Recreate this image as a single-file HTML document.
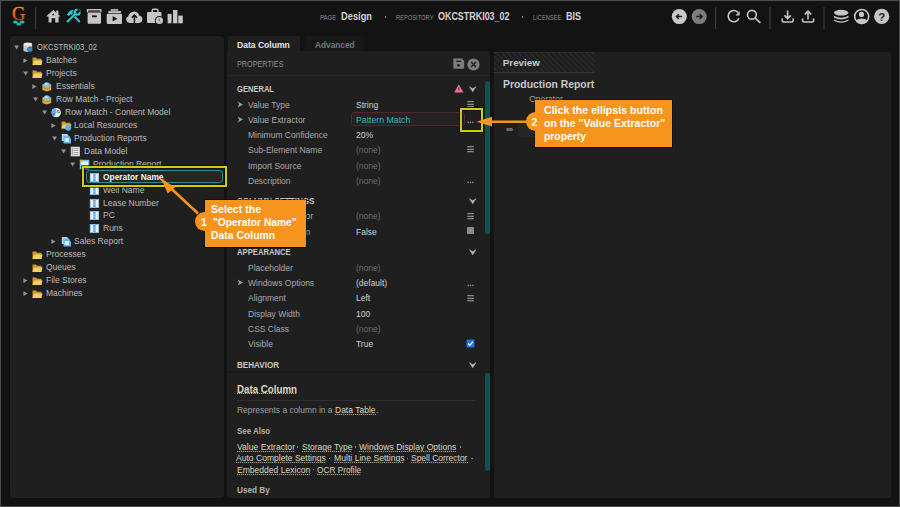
<!DOCTYPE html>
<html><head><meta charset="utf-8"><style>
html,body{margin:0;padding:0;}
body{width:900px;height:507px;background:#4d4d4d;position:relative;overflow:hidden;font-family:"Liberation Sans",sans-serif;}
.t{position:absolute;white-space:nowrap;}
.r{position:absolute;}
</style></head><body>

<div class="r" style="left:1px;top:1px;width:898px;height:505px;background:#131313;"></div>
<svg class="r" style="left:0;top:0" width="900" height="35" viewBox="0 0 900 35">
<defs><linearGradient id="gg" x1="0" y1="0" x2="0" y2="1"><stop offset="0.1" stop-color="#f4a41e"/><stop offset="0.55" stop-color="#f05a22"/><stop offset="0.9" stop-color="#e0161c"/></linearGradient></defs>
<text x="18.7" y="20.4" text-anchor="middle" font-family="Liberation Serif" font-size="18.5" fill="url(#gg)" stroke="url(#gg)" stroke-width="0.3">G</text>
<ellipse cx="15.4" cy="22" rx="2.4" ry="1.5" fill="#17c2b0"/>
<ellipse cx="22.2" cy="22" rx="2.4" ry="1.5" fill="#17c2b0"/>
<ellipse cx="18.8" cy="24.1" rx="2.4" ry="1.5" fill="#17c2b0"/>
<rect x="34.8" y="7" width="1.5" height="22" fill="#363636"/>
<!-- home -->
<path d="M53.3 10 L60.6 16.6 L58.6 16.6 L58.6 22.6 L55.2 22.6 L55.2 18.2 L51.6 18.2 L51.6 22.6 L48.6 22.6 L48.6 16.6 L46.1 16.6 Z" fill="#c6c6c6"/>
<rect x="56.2" y="10.6" width="2.2" height="3.6" fill="#c6c6c6"/>
<path d="M53.3 13.3 L54.6 15.2 L52 15.2 Z" fill="#131313"/>
<!-- tools -->
<path d="M71 13 L79.2 21.3" stroke="#2ec8d4" stroke-width="2.1" stroke-linecap="round"/>
<path d="M66.8 14.4 L70.4 10.6 Q72.2 9.4 73.6 10.4 L72.6 12.2 L70.6 14.4 L68.6 16 Z" fill="#2ec8d4"/>
<path d="M67.4 21.6 L75.2 13.8" stroke="#131313" stroke-width="3.6"/>
<path d="M67.6 21.4 L75.6 13.4" stroke="#2ec8d4" stroke-width="2.1" stroke-linecap="round"/>
<circle cx="77.2" cy="12.3" r="2.5" stroke="#2ec8d4" stroke-width="2" fill="none"/>
<path d="M77.2 12.3 L77.8 8.6 L80.9 11.6 Z" fill="#131313"/>
<!-- archive -->
<rect x="86.8" y="9" width="14.8" height="3.6" rx="0.8" fill="#c6c6c6"/>
<rect x="88.1" y="10.4" width="12.2" height="1.3" fill="#131313"/>
<rect x="87.6" y="13" width="13.4" height="10.8" rx="0.8" fill="#c6c6c6"/>
<rect x="92" y="15.4" width="4.8" height="1.8" fill="#131313"/>
<!-- play box -->
<rect x="110.7" y="9.1" width="7.5" height="1.6" fill="#c6c6c6"/>
<rect x="108.4" y="11.1" width="12.6" height="2" fill="#c6c6c6"/>
<rect x="106.7" y="13.7" width="15.3" height="10.3" rx="1" fill="#c6c6c6"/>
<path d="M112.7 16 L117.2 18.8 L112.7 21.6 Z" fill="#131313"/>
<!-- cloud -->
<path d="M129.5 23.1 A3.6 3.6 0 0 1 128.4 16.2 A5.6 5.6 0 0 1 139.2 15.4 A3.9 3.9 0 0 1 139 23.1 Z" fill="#c6c6c6"/>
<path d="M134.4 23.2 L134.4 15.6 M131.8 17.8 L134.4 15 L137 17.8" stroke="#131313" stroke-width="1.5" fill="none"/>
<!-- briefcase -->
<rect x="152.2" y="9.2" width="5.8" height="3.6" rx="1.2" fill="none" stroke="#c6c6c6" stroke-width="1.4"/>
<rect x="147" y="12" width="14.5" height="11" rx="1" fill="#c6c6c6"/>
<circle cx="159.4" cy="20.5" r="4.6" fill="#131313"/>
<circle cx="159.4" cy="20.5" r="3.6" fill="#c6c6c6"/>
<path d="M159 18.6 L159.3 20.6 L160.4 21.6" stroke="#333" stroke-width="0.8" fill="none"/>
<!-- bars -->
<rect x="167.6" y="13.9" width="4" height="9.4" fill="#c6c6c6"/>
<rect x="173" y="10" width="4.4" height="13.3" fill="#c6c6c6"/>
<rect x="178.3" y="15.6" width="4.5" height="7.7" fill="#c6c6c6"/>
<!-- nav circles -->
<circle cx="679.3" cy="16.6" r="7.5" fill="#c9c9c9"/>
<path d="M682.2 16.6 L676.4 16.6 M678.8 14.2 L676.4 16.6 L678.8 19" stroke="#1c1c1c" stroke-width="1.5" fill="none"/>
<circle cx="699.2" cy="16.6" r="7.5" fill="#7d7d7d"/>
<path d="M696.3 16.6 L702.1 16.6 M699.7 14.2 L702.1 16.6 L699.7 19" stroke="#1c1c1c" stroke-width="1.5" fill="none"/>
<rect x="715" y="7" width="1.2" height="22" fill="#3a3a3a"/>
<!-- refresh -->
<path d="M738.2 12.6 A5.6 5.6 0 1 0 739 18.2" stroke="#c6c6c6" stroke-width="1.6" fill="none"/>
<path d="M735.4 15.4 L739.6 15.4 L739.6 10.9 Z" fill="#c6c6c6"/>
<!-- search -->
<circle cx="751.9" cy="14.8" r="4.4" stroke="#c6c6c6" stroke-width="1.6" fill="none"/>
<path d="M755.2 18.1 L759.8 22.4" stroke="#c6c6c6" stroke-width="1.7" stroke-linecap="round"/>
<rect x="769.4" y="7" width="1.2" height="22" fill="#3a3a3a"/>
<!-- download -->
<path d="M787.6 10.4 L787.6 18.6 M784.4 15.4 L787.6 18.6 L790.8 15.4" stroke="#c6c6c6" stroke-width="1.6" fill="none"/>
<path d="M782.2 18.4 L782.2 20.6 Q782.2 22 783.6 22 L791.8 22 Q793.2 22 793.2 20.6 L793.2 18.4" stroke="#c6c6c6" stroke-width="1.6" fill="none"/>
<!-- upload -->
<path d="M808 19.6 L808 11.2 M804.8 14.4 L808 11.2 L811.2 14.4" stroke="#c6c6c6" stroke-width="1.6" fill="none"/>
<path d="M802.6 18.4 L802.6 20.6 Q802.6 22 804 22 L812.2 22 Q813.6 22 813.6 20.6 L813.6 18.4" stroke="#c6c6c6" stroke-width="1.6" fill="none"/>
<rect x="823.4" y="7" width="1.2" height="22" fill="#3a3a3a"/>
<!-- database -->
<ellipse cx="841.2" cy="12.7" rx="7.3" ry="2.9" fill="#c6c6c6"/>
<path d="M833.9 15.8 Q841.2 19.8 848.5 15.8 L848.5 17.4 Q841.2 21.4 833.9 17.4 Z" fill="#c6c6c6"/>
<path d="M833.9 19.4 Q841.2 23.4 848.5 19.4 L848.5 20.8 Q841.2 24.8 833.9 20.8 Z" fill="#c6c6c6"/>
<!-- user -->
<circle cx="861.7" cy="16.5" r="7" stroke="#c6c6c6" stroke-width="1.6" fill="none"/>
<circle cx="861.5" cy="14.4" r="2.6" fill="#c6c6c6"/>
<path d="M855.6 20.6 Q861.6 16.6 867.8 20.6 Q865 23.6 861.7 23.6 Q858.4 23.6 855.6 20.6 Z" fill="#c6c6c6"/>
<!-- help -->
<circle cx="881.7" cy="16.4" r="7.6" fill="#c6c6c6"/>
<text x="881.7" y="20.6" text-anchor="middle" font-family="Liberation Sans" font-weight="bold" font-size="11.5" fill="#1c1c1c">?</text>
</svg>
<div class="t" style="left:319.8px;top:13.87px;font-size:7.6px;line-height:7.6px;color:#8c8c8c;transform:scaleX(0.7881);transform-origin:0 0;">PAGE</div>
<div class="t" style="left:341px;top:12.23px;font-size:10px;line-height:10px;color:#d4d4d4;font-weight:bold;transform:scaleX(0.9298);transform-origin:0 0;">Design</div>
<div class="r" style="left:384.6px;top:16.3px;width:1.4px;height:1.4px;background:#8c8c8c;"></div>
<div class="t" style="left:395.5px;top:13.87px;font-size:7.6px;line-height:7.6px;color:#8c8c8c;transform:scaleX(0.7567);transform-origin:0 0;">REPOSITORY</div>
<div class="t" style="left:438px;top:12.23px;font-size:10px;line-height:10px;color:#d4d4d4;font-weight:bold;transform:scaleX(0.8934);transform-origin:0 0;">OKCSTRKI03_02</div>
<div class="r" style="left:521.6px;top:16.3px;width:1.4px;height:1.4px;background:#8c8c8c;"></div>
<div class="t" style="left:532.7px;top:13.87px;font-size:7.6px;line-height:7.6px;color:#8c8c8c;transform:scaleX(0.7528);transform-origin:0 0;">LICENSEE</div>
<div class="t" style="left:565.5px;top:12.23px;font-size:10px;line-height:10px;color:#d4d4d4;font-weight:bold;transform:scaleX(0.9118);transform-origin:0 0;">BIS</div>
<div class="r" style="left:9.5px;top:35.7px;width:214px;height:461.9px;background:#1f1f1f;border-radius:3px;box-shadow:0 0 0 1px #101010;"></div>
<div class="r" style="left:227.5px;top:35.7px;width:72.5px;height:20px;background:#1f1f1f;border-radius:3px 3px 0 0;"></div>
<div class="r" style="left:305px;top:35.7px;width:59px;height:16px;background:#181818;border-radius:3px 3px 0 0;"></div>
<div class="r" style="left:227px;top:51.3px;width:263.3px;height:446.3px;background:#1f1f1f;border-radius:0 3px 3px 3px;"></div>
<div class="r" style="left:493.5px;top:51.7px;width:397.7px;height:445.9px;background:#1f1f1f;border-radius:3px;"></div>
<div class="r" style="left:85.8px;top:170.2px;width:137.7px;height:12.5px;background:#262626;border:1.5px solid #2a8c92;border-radius:3.5px;box-sizing:border-box;"></div>
<svg class="r" style="left:14.0px;top:45.4px;" width="6" height="6" viewBox="0 0 6 6"><path d="M0.2 0.4 L5 0.4 L2.6 4.6 Z" fill="#8f949a"/></svg>
<svg class="r" style="left:23.0px;top:42.4px;" width="11" height="11" viewBox="0 0 11 11"><ellipse cx="4.8" cy="2.3" rx="4.3" ry="1.7" fill="#f0f0f0"/><rect x="0.5" y="2.3" width="8.6" height="6" fill="#dde0e3"/><ellipse cx="4.8" cy="8.3" rx="4.3" ry="1.7" fill="#c4c8cc"/><path d="M0.5 4.4 Q4.8 6.2 9.1 4.4 M0.5 6.4 Q4.8 8.2 9.1 6.4" stroke="#9a9ea2" stroke-width="0.6" fill="none"/><circle cx="7" cy="7.4" r="2.5" fill="#3c8fdc"/><circle cx="7" cy="7.4" r="2.5" fill="none" stroke="#1f1f1f" stroke-width="0.5"/></svg>
<div class="t" style="left:36.7px;top:43.38px;font-size:9px;line-height:9px;color:#bcbcbc;transform:scaleX(0.8447);transform-origin:0 0;">OKCSTRKI03_02</div>
<svg class="r" style="left:23.0px;top:57.93px;" width="6" height="6" viewBox="0 0 6 6"><path d="M0.4 0.2 L4.6 2.6 L0.4 5 Z" fill="#8f949a"/></svg>
<svg class="r" style="left:32.4px;top:56.33px;" width="11" height="10" viewBox="0 0 11 10"><path d="M0.5 1.5 L4 1.5 L5 2.8 L9.5 2.8 L9.5 9 L0.5 9 Z" fill="#c9982e"/><path d="M0.5 9 L2 4.5 L10.5 4.5 L9.3 9 Z" fill="#f3cf6a"/></svg>
<div class="t" style="left:46.1px;top:56.31px;font-size:9px;line-height:9px;color:#bcbcbc;transform:scaleX(0.944);transform-origin:0 0;">Batches</div>
<svg class="r" style="left:23.4px;top:71.26px;" width="6" height="6" viewBox="0 0 6 6"><path d="M0.2 0.4 L5 0.4 L2.6 4.6 Z" fill="#8f949a"/></svg>
<svg class="r" style="left:32.4px;top:69.26px;" width="11" height="10" viewBox="0 0 11 10"><path d="M0.5 1.5 L4 1.5 L5 2.8 L9.5 2.8 L9.5 9 L0.5 9 Z" fill="#c9982e"/><path d="M0.5 9 L2 4.5 L10.5 4.5 L9.3 9 Z" fill="#f3cf6a"/></svg>
<div class="t" style="left:46.1px;top:69.24px;font-size:9px;line-height:9px;color:#bcbcbc;transform:scaleX(0.944);transform-origin:0 0;">Projects</div>
<svg class="r" style="left:32.4px;top:83.79px;" width="6" height="6" viewBox="0 0 6 6"><path d="M0.4 0.2 L4.6 2.6 L0.4 5 Z" fill="#8f949a"/></svg>
<svg class="r" style="left:41.8px;top:81.19px;" width="11" height="11" viewBox="0 0 11 11"><path d="M0.4 3.6 L4.8 1.8 L9.2 3.6 L9.2 9 L4.8 10.6 L0.4 9 Z" fill="#e2a83c"/><path d="M0.4 6.2 L4.8 7.8 L9.2 6.2" stroke="#b88026" stroke-width="0.8" fill="none"/><ellipse cx="4.8" cy="3.9" rx="3" ry="2.6" fill="#74c2ee"/><ellipse cx="4.3" cy="3.2" rx="1.2" ry="0.9" fill="#cdeafa"/></svg>
<div class="t" style="left:55.5px;top:82.17px;font-size:9px;line-height:9px;color:#bcbcbc;transform:scaleX(0.944);transform-origin:0 0;">Essentials</div>
<svg class="r" style="left:32.8px;top:97.11999999999999px;" width="6" height="6" viewBox="0 0 6 6"><path d="M0.2 0.4 L5 0.4 L2.6 4.6 Z" fill="#8f949a"/></svg>
<svg class="r" style="left:41.8px;top:94.11999999999999px;" width="11" height="11" viewBox="0 0 11 11"><path d="M0.4 3.6 L4.8 1.8 L9.2 3.6 L9.2 9 L4.8 10.6 L0.4 9 Z" fill="#e2a83c"/><path d="M0.4 6.2 L4.8 7.8 L9.2 6.2" stroke="#b88026" stroke-width="0.8" fill="none"/><ellipse cx="4.8" cy="3.9" rx="3" ry="2.6" fill="#74c2ee"/><ellipse cx="4.3" cy="3.2" rx="1.2" ry="0.9" fill="#cdeafa"/></svg>
<div class="t" style="left:55.5px;top:95.10px;font-size:9px;line-height:9px;color:#bcbcbc;transform:scaleX(0.944);transform-origin:0 0;">Row Match - Project</div>
<svg class="r" style="left:42.2px;top:110.05px;" width="6" height="6" viewBox="0 0 6 6"><path d="M0.2 0.4 L5 0.4 L2.6 4.6 Z" fill="#8f949a"/></svg>
<svg class="r" style="left:51.2px;top:107.05px;" width="11" height="11" viewBox="0 0 11 11"><circle cx="5.2" cy="5.6" r="4.7" fill="#e6f2fa"/><path d="M5.2 0.9 A4.7 4.7 0 0 0 0.5 5.6 L5.2 5.6 Z" fill="#5fb0e8"/><path d="M0.5 5.6 A4.7 4.7 0 0 0 3 9.8 L5.2 5.6 Z" fill="#3f8fd4"/><path d="M5.2 5.6 L6.6 2.4 L8.4 3.4 Z" fill="#e04848"/><path d="M5.2 5.6 L8.9 4.6 L9.4 6.4 Z" fill="#50b050"/></svg>
<div class="t" style="left:64.9px;top:108.03px;font-size:9px;line-height:9px;color:#bcbcbc;transform:scaleX(0.944);transform-origin:0 0;">Row Match - Content Model</div>
<svg class="r" style="left:51.2px;top:122.58000000000001px;" width="6" height="6" viewBox="0 0 6 6"><path d="M0.4 0.2 L4.6 2.6 L0.4 5 Z" fill="#8f949a"/></svg>
<svg class="r" style="left:60.6px;top:119.98px;" width="11" height="11" viewBox="0 0 11 11"><path d="M0.5 1.5 L4 1.5 L5 2.8 L9.5 2.8 L9.5 8.5 L0.5 8.5 Z" fill="#c9982e"/><path d="M0.5 8.5 L2 4.5 L10.5 4.5 L9.3 8.5 Z" fill="#f3cf6a"/><circle cx="7.2" cy="7.8" r="3" fill="#5ab4ec"/></svg>
<div class="t" style="left:74.30000000000001px;top:120.96px;font-size:9px;line-height:9px;color:#bcbcbc;transform:scaleX(0.944);transform-origin:0 0;">Local Resources</div>
<svg class="r" style="left:51.6px;top:135.91px;" width="6" height="6" viewBox="0 0 6 6"><path d="M0.2 0.4 L5 0.4 L2.6 4.6 Z" fill="#8f949a"/></svg>
<svg class="r" style="left:60.6px;top:132.91px;" width="11" height="11" viewBox="0 0 11 11"><path d="M0.8 1 L6 1 L8.5 3.5 L8.5 8 L0.8 8 Z" fill="#9fd6f4"/><path d="M2.5 3 L7.5 3 L10 5.5 L10 10.5 L2.5 10.5 Z" fill="#62b6ea"/><rect x="3.8" y="5" width="4" height="4" fill="#dff1fb"/></svg>
<div class="t" style="left:74.30000000000001px;top:133.89px;font-size:9px;line-height:9px;color:#bcbcbc;transform:scaleX(0.944);transform-origin:0 0;">Production Reports</div>
<svg class="r" style="left:61.0px;top:148.84px;" width="6" height="6" viewBox="0 0 6 6"><path d="M0.2 0.4 L5 0.4 L2.6 4.6 Z" fill="#8f949a"/></svg>
<svg class="r" style="left:70.0px;top:145.84px;" width="11" height="11" viewBox="0 0 11 11"><rect x="0.8" y="0.8" width="9" height="9.5" fill="#eceef0"/><path d="M3.4 2.6 L8.6 2.6 M3.4 4.6 L8.6 4.6 M3.4 6.6 L8.6 6.6 M3.4 8.6 L8.6 8.6" stroke="#8a9098" stroke-width="0.9"/><rect x="1.6" y="1.6" width="1.2" height="8" fill="#9aa0a8"/></svg>
<div class="t" style="left:83.7px;top:146.82px;font-size:9px;line-height:9px;color:#bcbcbc;transform:scaleX(0.944);transform-origin:0 0;">Data Model</div>
<svg class="r" style="left:70.4px;top:161.77px;" width="6" height="6" viewBox="0 0 6 6"><path d="M0.2 0.4 L5 0.4 L2.6 4.6 Z" fill="#8f949a"/></svg>
<svg class="r" style="left:79.4px;top:158.77px;" width="11" height="11" viewBox="0 0 11 11"><rect x="0.8" y="0.8" width="9.5" height="9.5" fill="#7cc3ee"/><rect x="2.2" y="2.4" width="6.8" height="6.6" fill="#eaf5fc"/><rect x="0.8" y="0.8" width="3" height="1.6" fill="#e0a040"/></svg>
<div class="t" style="left:93.10000000000001px;top:159.75px;font-size:9px;line-height:9px;color:#bcbcbc;transform:scaleX(0.944);transform-origin:0 0;">Production Report</div>
<svg class="r" style="left:88.8px;top:171.70000000000002px;" width="11" height="11" viewBox="0 0 11 11"><rect x="0.8" y="1" width="9.3" height="9" fill="#7fbdea"/><rect x="1.8" y="2" width="7.3" height="7" fill="#f2f8fc"/><rect x="4.2" y="2" width="2.4" height="7" fill="#5aa3de"/><path d="M1.8 4.3 L9.1 4.3 M1.8 6.6 L9.1 6.6" stroke="#c6def0" stroke-width="0.5"/></svg>
<div class="t" style="left:102.5px;top:172.68px;font-size:9px;line-height:9px;color:#f2f2f2;font-weight:bold;transform:scaleX(0.9305);transform-origin:0 0;">Operator Name</div>
<svg class="r" style="left:88.8px;top:184.63px;" width="11" height="11" viewBox="0 0 11 11"><rect x="0.8" y="1" width="9.3" height="9" fill="#7fbdea"/><rect x="1.8" y="2" width="7.3" height="7" fill="#f2f8fc"/><rect x="4.2" y="2" width="2.4" height="7" fill="#5aa3de"/><path d="M1.8 4.3 L9.1 4.3 M1.8 6.6 L9.1 6.6" stroke="#c6def0" stroke-width="0.5"/></svg>
<div class="t" style="left:102.5px;top:185.61px;font-size:9px;line-height:9px;color:#bcbcbc;transform:scaleX(0.944);transform-origin:0 0;">Well Name</div>
<svg class="r" style="left:88.8px;top:197.56px;" width="11" height="11" viewBox="0 0 11 11"><rect x="0.8" y="1" width="9.3" height="9" fill="#7fbdea"/><rect x="1.8" y="2" width="7.3" height="7" fill="#f2f8fc"/><rect x="4.2" y="2" width="2.4" height="7" fill="#5aa3de"/><path d="M1.8 4.3 L9.1 4.3 M1.8 6.6 L9.1 6.6" stroke="#c6def0" stroke-width="0.5"/></svg>
<div class="t" style="left:102.5px;top:198.54px;font-size:9px;line-height:9px;color:#bcbcbc;transform:scaleX(0.944);transform-origin:0 0;">Lease Number</div>
<svg class="r" style="left:88.8px;top:210.49px;" width="11" height="11" viewBox="0 0 11 11"><rect x="0.8" y="1" width="9.3" height="9" fill="#7fbdea"/><rect x="1.8" y="2" width="7.3" height="7" fill="#f2f8fc"/><rect x="4.2" y="2" width="2.4" height="7" fill="#5aa3de"/><path d="M1.8 4.3 L9.1 4.3 M1.8 6.6 L9.1 6.6" stroke="#c6def0" stroke-width="0.5"/></svg>
<div class="t" style="left:102.5px;top:211.47px;font-size:9px;line-height:9px;color:#bcbcbc;transform:scaleX(0.944);transform-origin:0 0;">PC</div>
<svg class="r" style="left:88.8px;top:223.42px;" width="11" height="11" viewBox="0 0 11 11"><rect x="0.8" y="1" width="9.3" height="9" fill="#7fbdea"/><rect x="1.8" y="2" width="7.3" height="7" fill="#f2f8fc"/><rect x="4.2" y="2" width="2.4" height="7" fill="#5aa3de"/><path d="M1.8 4.3 L9.1 4.3 M1.8 6.6 L9.1 6.6" stroke="#c6def0" stroke-width="0.5"/></svg>
<div class="t" style="left:102.5px;top:224.40px;font-size:9px;line-height:9px;color:#bcbcbc;transform:scaleX(0.944);transform-origin:0 0;">Runs</div>
<svg class="r" style="left:51.2px;top:238.95px;" width="6" height="6" viewBox="0 0 6 6"><path d="M0.4 0.2 L4.6 2.6 L0.4 5 Z" fill="#8f949a"/></svg>
<svg class="r" style="left:60.6px;top:236.35px;" width="11" height="11" viewBox="0 0 11 11"><path d="M0.8 1 L6 1 L8.5 3.5 L8.5 8 L0.8 8 Z" fill="#9fd6f4"/><path d="M2.5 3 L7.5 3 L10 5.5 L10 10.5 L2.5 10.5 Z" fill="#62b6ea"/><rect x="3.8" y="5" width="4" height="4" fill="#dff1fb"/></svg>
<div class="t" style="left:74.30000000000001px;top:237.33px;font-size:9px;line-height:9px;color:#bcbcbc;transform:scaleX(0.944);transform-origin:0 0;">Sales Report</div>
<svg class="r" style="left:32.4px;top:250.28px;" width="11" height="10" viewBox="0 0 11 10"><path d="M0.5 1.5 L4 1.5 L5 2.8 L9.5 2.8 L9.5 9 L0.5 9 Z" fill="#c9982e"/><path d="M0.5 9 L2 4.5 L10.5 4.5 L9.3 9 Z" fill="#f3cf6a"/></svg>
<div class="t" style="left:46.1px;top:250.26px;font-size:9px;line-height:9px;color:#bcbcbc;transform:scaleX(0.944);transform-origin:0 0;">Processes</div>
<svg class="r" style="left:32.4px;top:263.21000000000004px;" width="11" height="10" viewBox="0 0 11 10"><path d="M0.5 1.5 L4 1.5 L5 2.8 L9.5 2.8 L9.5 9 L0.5 9 Z" fill="#c9982e"/><path d="M0.5 9 L2 4.5 L10.5 4.5 L9.3 9 Z" fill="#f3cf6a"/></svg>
<div class="t" style="left:46.1px;top:263.19px;font-size:9px;line-height:9px;color:#bcbcbc;transform:scaleX(0.944);transform-origin:0 0;">Queues</div>
<svg class="r" style="left:23.0px;top:277.74px;" width="6" height="6" viewBox="0 0 6 6"><path d="M0.4 0.2 L4.6 2.6 L0.4 5 Z" fill="#8f949a"/></svg>
<svg class="r" style="left:32.4px;top:276.14000000000004px;" width="11" height="10" viewBox="0 0 11 10"><path d="M0.5 1.5 L4 1.5 L5 2.8 L9.5 2.8 L9.5 9 L0.5 9 Z" fill="#c9982e"/><path d="M0.5 9 L2 4.5 L10.5 4.5 L9.3 9 Z" fill="#f3cf6a"/></svg>
<div class="t" style="left:46.1px;top:276.12px;font-size:9px;line-height:9px;color:#bcbcbc;transform:scaleX(0.944);transform-origin:0 0;">File Stores</div>
<svg class="r" style="left:23.0px;top:290.66999999999996px;" width="6" height="6" viewBox="0 0 6 6"><path d="M0.4 0.2 L4.6 2.6 L0.4 5 Z" fill="#8f949a"/></svg>
<svg class="r" style="left:32.4px;top:289.07px;" width="11" height="10" viewBox="0 0 11 10"><path d="M0.5 1.5 L4 1.5 L5 2.8 L9.5 2.8 L9.5 9 L0.5 9 Z" fill="#c9982e"/><path d="M0.5 9 L2 4.5 L10.5 4.5 L9.3 9 Z" fill="#f3cf6a"/></svg>
<div class="t" style="left:46.1px;top:289.05px;font-size:9px;line-height:9px;color:#bcbcbc;transform:scaleX(0.944);transform-origin:0 0;">Machines</div>
<div class="t" style="left:237.4px;top:39.96px;font-size:9.5px;line-height:9.5px;color:#e6e6e6;font-weight:bold;transform:scaleX(0.9012);transform-origin:0 0;">Data Column</div>
<div class="t" style="left:314.6px;top:39.96px;font-size:9.5px;line-height:9.5px;color:#767676;font-weight:bold;transform:scaleX(0.8722);transform-origin:0 0;">Advanced</div>
<div class="t" style="left:237px;top:59.68px;font-size:9px;line-height:9px;color:#8e8e8e;transform:scaleX(0.8038);transform-origin:0 0;">PROPERTIES</div>
<div class="r" style="left:227px;top:75.2px;width:263.3px;height:1px;background:#272727;"></div>
<svg class="r" style="left:452px;top:58px;" width="13" height="13" viewBox="0 0 13 13"><path d="M1.8 0.4 L9.6 0.4 L12.2 3 L12.2 9.6 Q12.2 10.8 11 10.8 L2.5 10.8 Q1.3 10.8 1.3 9.6 L1.3 1.2 Q1.3 0.4 1.8 0.4 Z" fill="#7e7e7e"/><rect x="4.3" y="2.6" width="4.9" height="1.4" fill="#1f1f1f"/><circle cx="6.5" cy="7.3" r="1.4" fill="#1f1f1f"/></svg>
<svg class="r" style="left:467px;top:57.5px;" width="13" height="13" viewBox="0 0 13 13"><circle cx="6.5" cy="6.5" r="6.1" fill="#7e7e7e"/><path d="M4 4 L9 9 M9 4 L4 9" stroke="#1f1f1f" stroke-width="1.5"/></svg>
<div class="r" style="left:485px;top:80.9px;width:5px;height:153px;background:#164f50;border-radius:2.5px;"></div>
<div class="t" style="left:236.8px;top:85.01px;font-size:9.2px;line-height:9.2px;color:#c8c8c8;font-weight:bold;transform:scaleX(0.8226);transform-origin:0 0;">GENERAL</div>
<svg class="r" style="left:468.5px;top:85.9px;" width="8" height="7" viewBox="0 0 8 7"><path d="M0.4 0.6 L3.7 5.8 L7 0.6 L3.7 2.8 Z" fill="#bdbdbd" stroke="#bdbdbd" stroke-width="0.5" stroke-linejoin="round"/></svg>
<svg class="r" style="left:454px;top:84px;" width="10" height="9" viewBox="0 0 10 9"><path d="M4.8 0.5 L9.5 8.5 L0.2 8.5 Z" fill="#e8709a"/><rect x="4.3" y="3.5" width="1" height="2.8" fill="#6a2030"/></svg>
<svg class="r" style="left:236.6px;top:100.8px;" width="7" height="8" viewBox="0 0 7 8"><path d="M0.6 0.4 L6 3.4 L0.6 6.4 L2.2 3.4 Z" fill="#a0a0a0"/></svg>
<div class="t" style="left:248px;top:100.88px;font-size:9px;line-height:9px;color:#a9a9a9;transform:scaleX(0.944);transform-origin:0 0;">Value Type</div>
<div class="t" style="left:356px;top:100.88px;font-size:9px;line-height:9px;color:#d2d2d2;transform:scaleX(0.944);transform-origin:0 0;">String</div>
<svg class="r" style="left:466.5px;top:101.25px;" width="8" height="7" viewBox="0 0 8 7"><path d="M0.3 0.55 L6.8 0.55 M0.3 3.25 L6.8 3.25 M0.3 5.7 L6.8 5.7" stroke="#8e8e8e" stroke-width="1.25"/></svg>
<div class="r" style="left:351px;top:112.2px;width:114px;height:14.3px;background:#262122;border:1px solid #4f2b30;border-radius:3px;box-sizing:border-box;"></div>
<svg class="r" style="left:236.6px;top:115.8px;" width="7" height="8" viewBox="0 0 7 8"><path d="M0.6 0.4 L6 3.4 L0.6 6.4 L2.2 3.4 Z" fill="#a0a0a0"/></svg>
<div class="t" style="left:248px;top:115.88px;font-size:9px;line-height:9px;color:#a9a9a9;transform:scaleX(0.944);transform-origin:0 0;">Value Extractor</div>
<svg class="r" style="left:466.5px;top:120.7px;" width="8" height="3" viewBox="0 0 8 3"><rect x="0.5" y="0.75" width="1.4" height="1.4" fill="#8e8e8e"/><rect x="2.8" y="0.75" width="1.4" height="1.4" fill="#8e8e8e"/><rect x="5.1" y="0.75" width="1.4" height="1.4" fill="#8e8e8e"/></svg>
<div class="t" style="left:356px;top:115.88px;font-size:9px;line-height:9px;color:#33b8c4;transform:scaleX(0.9692);transform-origin:0 0;">Pattern Match</div>
<div class="t" style="left:248px;top:131.08px;font-size:9px;line-height:9px;color:#a9a9a9;transform:scaleX(0.944);transform-origin:0 0;">Minimum Confidence</div>
<div class="t" style="left:356px;top:131.08px;font-size:9px;line-height:9px;color:#d2d2d2;transform:scaleX(0.944);transform-origin:0 0;">20%</div>
<div class="t" style="left:248px;top:146.08px;font-size:9px;line-height:9px;color:#a9a9a9;transform:scaleX(0.944);transform-origin:0 0;">Sub-Element Name</div>
<div class="t" style="left:356px;top:146.08px;font-size:9px;line-height:9px;color:#6c6c6c;transform:scaleX(0.944);transform-origin:0 0;">(none)</div>
<svg class="r" style="left:466.5px;top:146.45000000000002px;" width="8" height="7" viewBox="0 0 8 7"><path d="M0.3 0.55 L6.8 0.55 M0.3 3.25 L6.8 3.25 M0.3 5.7 L6.8 5.7" stroke="#8e8e8e" stroke-width="1.25"/></svg>
<div class="t" style="left:248px;top:161.58px;font-size:9px;line-height:9px;color:#a9a9a9;transform:scaleX(0.944);transform-origin:0 0;">Import Source</div>
<div class="t" style="left:356px;top:161.58px;font-size:9px;line-height:9px;color:#6c6c6c;transform:scaleX(0.944);transform-origin:0 0;">(none)</div>
<div class="t" style="left:248px;top:176.58px;font-size:9px;line-height:9px;color:#a9a9a9;transform:scaleX(0.944);transform-origin:0 0;">Description</div>
<div class="t" style="left:356px;top:176.58px;font-size:9px;line-height:9px;color:#6c6c6c;transform:scaleX(0.944);transform-origin:0 0;">(none)</div>
<svg class="r" style="left:466.5px;top:181.4px;" width="8" height="3" viewBox="0 0 8 3"><rect x="0.5" y="0.75" width="1.4" height="1.4" fill="#8e8e8e"/><rect x="2.8" y="0.75" width="1.4" height="1.4" fill="#8e8e8e"/><rect x="5.1" y="0.75" width="1.4" height="1.4" fill="#8e8e8e"/></svg>
<div class="t" style="left:236.8px;top:196.91px;font-size:9.2px;line-height:9.2px;color:#c8c8c8;font-weight:bold;transform:scaleX(0.8703);transform-origin:0 0;">COLUMN SETTINGS</div>
<svg class="r" style="left:468.5px;top:197.8px;" width="8" height="7" viewBox="0 0 8 7"><path d="M0.4 0.6 L3.7 5.8 L7 0.6 L3.7 2.8 Z" fill="#bdbdbd" stroke="#bdbdbd" stroke-width="0.5" stroke-linejoin="round"/></svg>
<div class="t" style="left:248px;top:212.38px;font-size:9px;line-height:9px;color:#a9a9a9;transform:scaleX(0.9949);transform-origin:0 0;">Collection Editor</div>
<div class="t" style="left:356px;top:212.38px;font-size:9px;line-height:9px;color:#6c6c6c;transform:scaleX(0.944);transform-origin:0 0;">(none)</div>
<svg class="r" style="left:466.5px;top:212.75000000000003px;" width="8" height="7" viewBox="0 0 8 7"><path d="M0.3 0.55 L6.8 0.55 M0.3 3.25 L6.8 3.25 M0.3 5.7 L6.8 5.7" stroke="#8e8e8e" stroke-width="1.25"/></svg>
<div class="t" style="left:248px;top:227.68px;font-size:9px;line-height:9px;color:#a9a9a9;transform:scaleX(0.8695);transform-origin:0 0;">Is Hidden Column</div>
<div class="t" style="left:356px;top:227.68px;font-size:9px;line-height:9px;color:#d2d2d2;transform:scaleX(0.944);transform-origin:0 0;">False</div>
<div class="r" style="left:467px;top:227.3px;width:6.5px;height:7px;background:#8a8a8a;border-radius:0.5px;"></div>
<div class="t" style="left:236.8px;top:248.11px;font-size:9.2px;line-height:9.2px;color:#c8c8c8;font-weight:bold;transform:scaleX(0.8353);transform-origin:0 0;">APPEARANCE</div>
<svg class="r" style="left:468.5px;top:249px;" width="8" height="7" viewBox="0 0 8 7"><path d="M0.4 0.6 L3.7 5.8 L7 0.6 L3.7 2.8 Z" fill="#bdbdbd" stroke="#bdbdbd" stroke-width="0.5" stroke-linejoin="round"/></svg>
<div class="t" style="left:248px;top:263.98px;font-size:9px;line-height:9px;color:#a9a9a9;transform:scaleX(0.944);transform-origin:0 0;">Placeholder</div>
<div class="t" style="left:356px;top:263.98px;font-size:9px;line-height:9px;color:#6c6c6c;transform:scaleX(0.944);transform-origin:0 0;">(none)</div>
<svg class="r" style="left:236.6px;top:279.3px;" width="7" height="8" viewBox="0 0 7 8"><path d="M0.6 0.4 L6 3.4 L0.6 6.4 L2.2 3.4 Z" fill="#a0a0a0"/></svg>
<div class="t" style="left:248px;top:279.38px;font-size:9px;line-height:9px;color:#a9a9a9;transform:scaleX(0.944);transform-origin:0 0;">Windows Options</div>
<div class="t" style="left:356px;top:279.38px;font-size:9px;line-height:9px;color:#d2d2d2;transform:scaleX(0.944);transform-origin:0 0;">(default)</div>
<svg class="r" style="left:466.5px;top:284.2px;" width="8" height="3" viewBox="0 0 8 3"><rect x="0.5" y="0.75" width="1.4" height="1.4" fill="#8e8e8e"/><rect x="2.8" y="0.75" width="1.4" height="1.4" fill="#8e8e8e"/><rect x="5.1" y="0.75" width="1.4" height="1.4" fill="#8e8e8e"/></svg>
<div class="t" style="left:248px;top:294.38px;font-size:9px;line-height:9px;color:#a9a9a9;transform:scaleX(0.944);transform-origin:0 0;">Alignment</div>
<div class="t" style="left:356px;top:294.38px;font-size:9px;line-height:9px;color:#d2d2d2;transform:scaleX(0.944);transform-origin:0 0;">Left</div>
<svg class="r" style="left:466.5px;top:294.75px;" width="8" height="7" viewBox="0 0 8 7"><path d="M0.3 0.55 L6.8 0.55 M0.3 3.25 L6.8 3.25 M0.3 5.7 L6.8 5.7" stroke="#8e8e8e" stroke-width="1.25"/></svg>
<div class="t" style="left:248px;top:309.68px;font-size:9px;line-height:9px;color:#a9a9a9;transform:scaleX(0.944);transform-origin:0 0;">Display Width</div>
<div class="t" style="left:356px;top:309.68px;font-size:9px;line-height:9px;color:#d2d2d2;transform:scaleX(0.944);transform-origin:0 0;">100</div>
<div class="t" style="left:248px;top:324.58px;font-size:9px;line-height:9px;color:#a9a9a9;transform:scaleX(0.944);transform-origin:0 0;">CSS Class</div>
<div class="t" style="left:356px;top:324.58px;font-size:9px;line-height:9px;color:#6c6c6c;transform:scaleX(0.944);transform-origin:0 0;">(none)</div>
<div class="t" style="left:248px;top:340.28px;font-size:9px;line-height:9px;color:#a9a9a9;transform:scaleX(0.944);transform-origin:0 0;">Visible</div>
<div class="t" style="left:356px;top:340.28px;font-size:9px;line-height:9px;color:#d2d2d2;transform:scaleX(0.944);transform-origin:0 0;">True</div>
<svg class="r" style="left:466px;top:338.5px;" width="9" height="9" viewBox="0 0 9 9"><rect x="0.5" y="0.5" width="8" height="8" rx="1.2" fill="#1a73e8"/><path d="M2 4.5 L3.8 6.3 L7 2.6" stroke="#fff" stroke-width="1.3" fill="none"/></svg>
<div class="t" style="left:236.8px;top:360.71px;font-size:9.2px;line-height:9.2px;color:#c8c8c8;font-weight:bold;transform:scaleX(0.8793);transform-origin:0 0;">BEHAVIOR</div>
<svg class="r" style="left:468.5px;top:361.6px;" width="8" height="7" viewBox="0 0 8 7"><path d="M0.4 0.6 L3.7 5.8 L7 0.6 L3.7 2.8 Z" fill="#bdbdbd" stroke="#bdbdbd" stroke-width="0.5" stroke-linejoin="round"/></svg>
<div class="r" style="left:227px;top:371px;width:263.3px;height:1.5px;background:#1a1a1a;"></div>
<div class="r" style="left:485px;top:373px;width:5px;height:97.5px;background:#164f50;border-radius:2.5px;"></div>
<div class="t" style="left:237px;top:384.01px;font-size:10.5px;line-height:10.5px;color:#dcd8c2;font-weight:bold;transform:scaleX(0.9266);transform-origin:0 0;">Data Column</div>
<div class="r" style="left:237px;top:393.4px;width:60px;height:1px;background:repeating-linear-gradient(90deg,#9a9682 0 1px,#4a4942 1px 2px);"></div>
<div class="r" style="left:237px;top:400px;width:238px;height:1px;background:#2e2e2e;"></div>
<div class="t" style="left:237px;top:405.88px;font-size:9px;line-height:9px;color:#a0a0a0;transform:scaleX(0.9358);transform-origin:0 0;">Represents a column in a</div>
<div class="t" style="left:335.2px;top:406.28px;font-size:9px;line-height:9px;color:#dcd8c2;transform:scaleX(0.9448);transform-origin:0 0;">Data Table</div>
<div class="r" style="left:335.2px;top:414.4px;width:40.5px;height:1px;background:repeating-linear-gradient(90deg,#9a9682 0 1px,#4a4942 1px 2px);"></div>
<div class="t" style="left:376px;top:405.88px;font-size:9px;line-height:9px;color:#a0a0a0;">.</div>
<div class="t" style="left:237px;top:426.58px;font-size:9px;line-height:9px;color:#b4b4b4;font-weight:bold;transform:scaleX(0.8810);transform-origin:0 0;">See Also</div>
<div class="t" style="left:236.5px;top:442.78px;font-size:9px;line-height:9px;color:#dcd8c2;transform:scaleX(0.9530);transform-origin:0 0;">Value Extractor</div>
<div class="r" style="left:236.5px;top:450.9px;width:58.0px;height:1px;background:repeating-linear-gradient(90deg,#9a9682 0 1px,#4a4942 1px 2px);"></div>
<div class="r" style="left:297.2px;top:446.4px;width:1.3px;height:1.3px;background:#8a8a8a;"></div>
<div class="t" style="left:301.6px;top:442.78px;font-size:9px;line-height:9px;color:#dcd8c2;transform:scaleX(0.9443);transform-origin:0 0;">Storage Type</div>
<div class="r" style="left:301.6px;top:450.9px;width:50.39999999999998px;height:1px;background:repeating-linear-gradient(90deg,#9a9682 0 1px,#4a4942 1px 2px);"></div>
<div class="r" style="left:354.7px;top:446.4px;width:1.3px;height:1.3px;background:#8a8a8a;"></div>
<div class="t" style="left:359px;top:442.78px;font-size:9px;line-height:9px;color:#dcd8c2;transform:scaleX(0.9526);transform-origin:0 0;">Windows Display Options</div>
<div class="r" style="left:359px;top:450.9px;width:97.19999999999999px;height:1px;background:repeating-linear-gradient(90deg,#9a9682 0 1px,#4a4942 1px 2px);"></div>
<div class="r" style="left:459.9px;top:446.4px;width:1.3px;height:1.3px;background:#8a8a8a;"></div>
<div class="t" style="left:236.4px;top:454.08px;font-size:9px;line-height:9px;color:#dcd8c2;transform:scaleX(0.9497);transform-origin:0 0;">Auto Complete Settings</div>
<div class="r" style="left:236.4px;top:462.2px;width:89.79999999999998px;height:1px;background:repeating-linear-gradient(90deg,#9a9682 0 1px,#4a4942 1px 2px);"></div>
<div class="r" style="left:329.0px;top:457.7px;width:1.3px;height:1.3px;background:#8a8a8a;"></div>
<div class="t" style="left:333.7px;top:454.08px;font-size:9px;line-height:9px;color:#dcd8c2;transform:scaleX(0.9600);transform-origin:0 0;">Multi Line Settings</div>
<div class="r" style="left:333.7px;top:462.2px;width:70.60000000000002px;height:1px;background:repeating-linear-gradient(90deg,#9a9682 0 1px,#4a4942 1px 2px);"></div>
<div class="r" style="left:407.2px;top:457.7px;width:1.3px;height:1.3px;background:#8a8a8a;"></div>
<div class="t" style="left:411.4px;top:454.08px;font-size:9px;line-height:9px;color:#dcd8c2;transform:scaleX(0.9396);transform-origin:0 0;">Spell Corrector</div>
<div class="r" style="left:411.4px;top:462.2px;width:56.400000000000034px;height:1px;background:repeating-linear-gradient(90deg,#9a9682 0 1px,#4a4942 1px 2px);"></div>
<div class="r" style="left:471.4px;top:457.7px;width:1.3px;height:1.3px;background:#8a8a8a;"></div>
<div class="t" style="left:236.5px;top:465.58px;font-size:9px;line-height:9px;color:#dcd8c2;transform:scaleX(0.9500);transform-origin:0 0;">Embedded Lexicon</div>
<div class="r" style="left:236.5px;top:473.7px;width:73.19999999999999px;height:1px;background:repeating-linear-gradient(90deg,#9a9682 0 1px,#4a4942 1px 2px);"></div>
<div class="r" style="left:312.5px;top:469.2px;width:1.3px;height:1.3px;background:#8a8a8a;"></div>
<div class="t" style="left:316.6px;top:465.58px;font-size:9px;line-height:9px;color:#dcd8c2;transform:scaleX(0.9185);transform-origin:0 0;">OCR Profile</div>
<div class="r" style="left:316.6px;top:473.7px;width:44.099999999999966px;height:1px;background:repeating-linear-gradient(90deg,#9a9682 0 1px,#4a4942 1px 2px);"></div>
<div class="t" style="left:237px;top:486.28px;font-size:9px;line-height:9px;color:#b4b4b4;font-weight:bold;transform:scaleX(0.9108);transform-origin:0 0;">Used By</div>
<svg class="r" style="left:493.5px;top:51.8px;" width="101" height="21" viewBox="0 0 101 21"><defs><pattern id="st" width="4" height="4" patternUnits="userSpaceOnUse" patternTransform="rotate(-45)"><rect width="4" height="4" fill="#1d1d1d"/><rect width="1.6" height="4" fill="#2a2a2a"/></pattern></defs><rect width="101" height="21" fill="url(#st)"/><rect width="101" height="1" fill="#2e2e2e"/><rect y="20" width="101" height="1" fill="#333"/></svg>
<div class="t" style="left:502.8px;top:58.00px;font-size:9.8px;line-height:9.8px;color:#c8c8c8;font-weight:bold;">Preview</div>
<div class="t" style="left:503px;top:79.60px;font-size:10.4px;line-height:10.4px;color:#c8c8c8;font-weight:bold;">Production Report</div>
<div class="t" style="left:529.2px;top:95.30px;font-size:8.5px;line-height:8.5px;color:#a0a0a0;">Operator</div>
<div class="r" style="left:506.2px;top:128px;width:6.4px;height:3.4px;background:#6a6a6a;border-radius:1.7px;"></div>
<div class="r" style="left:517.8px;top:124.2px;width:30px;height:12.4px;background:#262626;border-radius:2px;"></div>
<div class="r" style="left:82px;top:165.9px;width:145.2px;height:21.3px;background:transparent;border:2px solid #cfcc0c;box-sizing:border-box;box-shadow:0 0 0 0.8px rgba(10,10,20,0.8), inset 0 0 0 0.8px rgba(10,10,20,0.8);"></div>
<div class="r" style="left:460.2px;top:108.1px;width:22.7px;height:24.4px;background:transparent;border:2px solid #cfcc0c;box-sizing:border-box;box-shadow:0 0 0 0.8px rgba(10,10,20,0.8), inset 0 0 0 0.8px rgba(10,10,20,0.8);"></div>
<svg class="r" style="left:150px;top:165px;" width="70" height="60" viewBox="0 0 70 60"><path d="M11.8 14.8 L48 48.5" stroke="#f7941e" stroke-width="2.6"/><path d="M11.8 14.8 L17.7 28.4 L25.4 21.9 Z" fill="#f7941e"/></svg>
<div class="r" style="left:204.8px;top:199.8px;width:101.5px;height:47.3px;background:#f7941e;box-shadow:0 0 0 1px rgba(0,0,0,0.45);"></div>
<div class="r" style="left:195px;top:211.5px;width:19px;height:19px;background:#f7941e;border-radius:50%;"></div>
<div class="t" style="left:201px;top:216.51px;font-size:10.5px;line-height:10.5px;color:#ffffff;font-weight:bold;">1</div>
<div class="t" style="left:211.1px;top:203.89px;font-size:11px;line-height:11px;color:#ffffff;font-weight:bold;transform:scaleX(0.9641);transform-origin:0 0;">Select the</div>
<div class="t" style="left:213px;top:216.59px;font-size:11px;line-height:11px;color:#ffffff;font-weight:bold;transform:scaleX(0.9299);transform-origin:0 0;">"Operator Name"</div>
<div class="t" style="left:211.1px;top:229.99px;font-size:11px;line-height:11px;color:#ffffff;font-weight:bold;transform:scaleX(0.9449);transform-origin:0 0;">Data Column</div>
<svg class="r" style="left:476px;top:112px;" width="56" height="20" viewBox="0 0 56 20"><path d="M14 9.7 L52 9.7" stroke="#f7941e" stroke-width="2.6"/><path d="M0.6 9.7 L16 4.8 L16 14.6 Z" fill="#f7941e"/></svg>
<div class="r" style="left:534.9px;top:100.1px;width:137.6px;height:47.4px;background:#f7941e;box-shadow:0 0 0 1px rgba(0,0,0,0.45);"></div>
<div class="r" style="left:526px;top:112.2px;width:19px;height:19px;background:#f7941e;border-radius:50%;"></div>
<div class="t" style="left:531.5px;top:117.41px;font-size:10.5px;line-height:10.5px;color:#ffffff;font-weight:bold;">2</div>
<div class="t" style="left:544.2px;top:104.69px;font-size:11px;line-height:11px;color:#ffffff;font-weight:bold;transform:scaleX(0.9639);transform-origin:0 0;">Click the ellipsis button</div>
<div class="t" style="left:544.2px;top:117.79px;font-size:11px;line-height:11px;color:#ffffff;font-weight:bold;transform:scaleX(0.9583);transform-origin:0 0;">on the "Value Extractor"</div>
<div class="t" style="left:544.2px;top:130.79px;font-size:11px;line-height:11px;color:#ffffff;font-weight:bold;transform:scaleX(0.9413);transform-origin:0 0;">property</div>
</body></html>
